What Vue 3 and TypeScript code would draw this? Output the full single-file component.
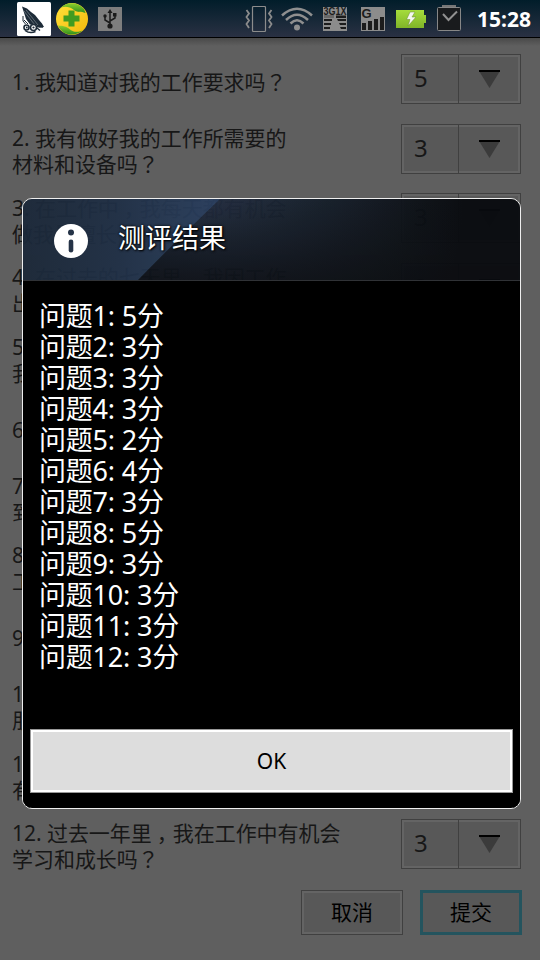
<script setup lang="ts">
interface Question {
  lines: string[]
  score: number
}

const questions: Question[] = [
  { lines: ['1. 我知道对我的工作要求吗？'], score: 5 },
  { lines: ['2. 我有做好我的工作所需要的', '材料和设备吗？'], score: 3 },
  { lines: ['3. 在工作中，我每天都有机会', '做我最擅长做的事吗？'], score: 3 },
  { lines: ['4. 在过去的七天里，我因工作', '出色而受到表扬吗？'], score: 3 },
  { lines: ['5. 我觉得我的主管或同事关心', '我的个人情况吗？'], score: 2 },
  { lines: ['6. 工作单位有人鼓励我的发展吗？'], score: 4 },
  { lines: ['7. 在工作中，我觉得我的意见受', '到重视吗？'], score: 3 },
  { lines: ['8. 公司的使命目标使我觉得我的', '工作重要吗？'], score: 5 },
  { lines: ['9. 我的同事们致力于高质量的工作吗？'], score: 3 },
  { lines: ['10. 我在工作单位有一个最要好的', '朋友吗？'], score: 3 },
  { lines: ['11. 在过去的六个月内，工作单位', '有人和我谈及我的进步吗？'], score: 3 },
  { lines: ['12. 过去一年里，我在工作中有机会', '学习和成长吗？'], score: 3 },
]

// Full-width punctuation is set centred in its cell, so it gets its own run.
const runs = (line: string): string[] => line.split(/([，？])/).filter((s) => s !== '')
</script>

<template>
  <div class="screen">
    <header class="status">
      <div class="left">
        <svg class="app" width="34" height="34" viewBox="0 0 34 34">
          <rect width="34" height="34" rx="1.5" fill="#fff" />
          <path d="M5 4.500 L10 6.500 L14 10 L18 13 L22 18 L25 21.500 L27 25 L22 25.500 L19 23 L13 22.500 L9 17 Z" fill="#1d2b38" />
          <path d="M7 9 L18 23 M9 8 L21 23" stroke="#8d979e" stroke-width=".6" />
          <path d="M6 14 V19 L8.500 22 M7 18 L11 22" stroke="#1d2b38" stroke-width="1" fill="none" />
          <g fill="#fff" stroke="#1d2b38" stroke-width="1.600">
            <circle cx="9.500" cy="25.500" r="2.500" /><circle cx="16.500" cy="25.500" r="3" />
          </g>
          <path d="M8 28.500 Q13 32 18.500 29.500 M20 26 L23 28.500 M20 24.500 L26 25" stroke="#1d2b38" stroke-width="1.400" fill="none" />
          <circle cx="9.800" cy="25.500" r=".9" fill="#1d2b38" /><circle cx="16.500" cy="25.500" r="1.100" fill="#1d2b38" />
        </svg>
        <svg class="guard" width="32" height="32" viewBox="0 0 32 32">
          <defs>
            <linearGradient id="gold" x1="0" y1="0" x2="1" y2="1">
              <stop offset="0" stop-color="#ffe23a" /><stop offset="1" stop-color="#f5b80c" />
            </linearGradient>
            <linearGradient id="leaf" x1="0" y1="0" x2="0" y2="1">
              <stop offset="0" stop-color="#8fcf2c" /><stop offset="1" stop-color="#2e8f1d" />
            </linearGradient>
          </defs>
          <circle cx="16" cy="16" r="16" fill="url(#gold)" />
          <path d="M5 4.500 C11 -1.500 22 -1.500 28 6 L29.500 10 C25 8 22 10 18 7 C14 3.500 9 3 5 4.500 Z" fill="url(#leaf)" />
          <path d="M2 22.500 C7 23 10 23 14 26.500 C18 30 24 29 27 27 C21 33.500 7 34 2 22.500 Z" fill="url(#leaf)" />
          <path d="M12.500 7.500 h6 v5 h5 v6 h-5 v5 h-6 v-5 h-5 v-6 h5 z" fill="#429c20" />
        </svg>
        <svg class="usb" width="24" height="24" viewBox="0 0 24 24">
          <rect width="24" height="24" fill="#7e7e7e" />
          <g stroke="#1b1b1b" stroke-width="1.500" fill="none">
            <path d="M12 19 V5 M12 16 L7 13 V10 M12 14 L17 11 V8" />
          </g>
          <path d="M12 2 L14.500 6 h-5 Z" fill="#1b1b1b" />
          <circle cx="12" cy="19" r="2.600" fill="#1b1b1b" />
          <circle cx="7" cy="9" r="1.700" fill="#1b1b1b" />
          <rect x="15" y="6" width="3.500" height="3.500" fill="#1b1b1b" />
        </svg>
      </div>
      <div class="right">
        <svg class="vibrate" width="28" height="26" viewBox="0 0 28 26" fill="none" stroke="#8c8c8c">
          <rect x="7.500" y=".5" width="13" height="25" rx="1" stroke-width="1.200" />
          <path d="M1.500 4 L4 7.500 L1.500 11 L4 14.500 L1.500 18 L4 22 M26.500 4 L24 7.500 L26.500 11 L24 14.500 L26.500 18 L24 22" stroke-width="1.800" />
        </svg>
        <svg class="wifi" width="32" height="24" viewBox="0 0 32 24" fill="none" stroke="#8f8f8f" stroke-width="2.500">
          <path d="M1 8.500 Q16 -5 31 8.500" />
          <path d="M5 13 Q16 2.500 27 13" />
          <path d="M9.500 16.500 Q16 10 22.500 16.500" />
          <circle cx="16" cy="20.500" r="3" fill="#8f8f8f" stroke="none" />
        </svg>
        <svg class="net" width="24" height="24" viewBox="0 0 24 24">
          <rect width="24" height="24" fill="#8c8c8c" />
          <text x="0.5" y="7.500" font-size="10" textLength="23" lengthAdjust="spacingAndGlyphs" class="glyph">3G1X</text>
          <g fill="#1c1c1c">
            <path d="M1 11 h10 v-3 h-10z" fill="#686868" /><path d="M13 8.500 h10 v2.500 h-10z" />
            <path d="M1 12 h8 v2 h-8z M1 16 h7 v2 h-7z M1 20 h6 v2 h-6z" />
            <path d="M14 12 h9 v2 h-8z M16 16 h7 v2 h-6z M17 20 h6 v2 h-5z" />
          </g>
        </svg>
        <svg class="signal" width="24" height="24" viewBox="0 0 24 24">
          <rect width="24" height="24" fill="#8c8c8c" />
          <text x="0.5" y="10.500" font-size="13" class="glyph">G</text>
          <path d="M1 16 h4 v7 h-4z M7 14 h4 v9 h-4z M13 12 h4 v11 h-4z M19 10 h4 v13 h-4z" fill="#1c1c1c" />
        </svg>
        <svg class="battery" width="30" height="18" viewBox="0 0 30 18">
          <defs>
            <linearGradient id="cell" x1="0" y1="0" x2="0" y2="1">
              <stop offset="0" stop-color="#a5dc3c" /><stop offset="1" stop-color="#80b528" />
            </linearGradient>
          </defs>
          <path d="M0 0 H28 V5 H30 V13 H28 V18 H0 Z" fill="url(#cell)" />
          <path d="M14 2 L19 2 L16 7 L20 7 L12 16 L14 9.500 L10.500 9.500 Z" fill="#f4f7ee" stroke="#6b8a33" stroke-width=".5" />
        </svg>
        <svg class="task" width="24" height="26" viewBox="0 0 24 26">
          <rect x="5" y="0" width="14" height="2" fill="#777" />
          <rect x=".5" y="2.500" width="23" height="23" rx="1" fill="#191b1d" stroke="#878787" />
          <path d="M6 9 L11.500 15 L20 6.500" fill="none" stroke="#919191" stroke-width="2" />
        </svg>
        <span class="time">15:28</span>
      </div>
    </header>

    <main class="survey">
      <div v-for="(q, i) in questions" :key="i" class="row">
        <p class="question">
          <span v-for="line in q.lines" :key="line" class="line">
            <span v-for="(r, k) in runs(line)" :key="k" :class="{ mark: r === '？', comma: r === '，' }">{{ r }}</span>
          </span>
        </p>
        <div class="select">
          <span class="value">{{ q.score }}</span>
          <span class="drop">
            <svg width="21" height="18" viewBox="0 0 21 18">
              <path d="M0 1 H21 L10.500 18 Z" fill="#3b3b3b" />
              <rect width="21" height="2" fill="#000" />
            </svg>
          </span>
        </div>
      </div>
      <div class="actions">
        <button class="btn" type="button">取消</button>
        <button class="btn focus" type="button">提交</button>
      </div>
    </main>

    <section class="dialog">
      <div class="title">
        <svg class="sheen" width="497" height="81" viewBox="0 0 497 81">
          <defs>
            <radialGradient id="dark" gradientUnits="userSpaceOnUse" cx="180" cy="0" r="260">
              <stop offset="0" stop-color="#242f43" /><stop offset=".5" stop-color="#151e29" /><stop offset="1" stop-color="#090b0f" />
            </radialGradient>
            <linearGradient id="fade" x1="0" y1="0" x2="0" y2="1">
              <stop offset="0" stop-color="#090b0f" stop-opacity="0" /><stop offset="1" stop-color="#090b0f" stop-opacity=".7" />
            </linearGradient>
            <linearGradient id="blue" gradientUnits="userSpaceOnUse" x1="0" y1="0" x2="190" y2="0">
              <stop offset="0" stop-color="#1c2939" /><stop offset=".5" stop-color="#203046" /><stop offset="1" stop-color="#2b3f5e" />
            </linearGradient>
          </defs>
          <rect width="497" height="81" fill="url(#dark)" />
          <rect width="497" height="81" fill="url(#fade)" />
          <path d="M0 0 H197 Q158 37 115 81 H0 Z" fill="url(#blue)" />
        </svg>
        <svg class="info" width="34" height="34" viewBox="0 0 34 34">
          <circle cx="17" cy="17" r="17" fill="#fff" />
          <circle cx="17" cy="8.500" r="3" fill="#253347" />
          <rect x="14.700" y="15.500" width="4.600" height="13" rx="2.300" fill="#253347" />
        </svg>
        <h1>测评结果</h1>
      </div>
      <ul class="scores">
        <li v-for="(q, i) in questions" :key="i">问题{{ i + 1 }}: {{ q.score }}分</li>
      </ul>
      <button class="ok" type="button">OK</button>
    </section>
  </div>
</template>

<style>
body {
  margin: 0;
  background: #5f5f5f;
}
</style>

<style scoped>
.screen {
  position: relative;
  box-sizing: border-box;
  width: 540px;
  height: 960px;
  overflow: hidden;
  background: #5f5f5f;
  font-family: "Noto Sans", "Noto Sans CJK SC", sans-serif;
  display: flex;
  flex-direction: column;
}
.screen svg {
  display: block;
  flex: none;
}
.status {
  box-sizing: border-box;
  height: 38px;
  flex: none;
  display: flex;
  justify-content: space-between;
  align-items: center;
  padding: 0 9px 0 17px;
  border-bottom: 1px solid #000;
  background: linear-gradient(#011d2a, #2a3143);
}
.left,
.right {
  display: flex;
  align-items: center;
}
.guard {
  margin-left: 5px;
}
.usb {
  margin-left: 10px;
}
.wifi {
  margin-left: 8px;
}
.net {
  margin-left: 10px;
}
.signal {
  margin-left: 14px;
}
.battery {
  margin-left: 11px;
}
.task {
  margin: 0 0 2px 11px;
}
.glyph {
  font-family: "Liberation Sans", sans-serif;
  font-weight: 700;
  fill: #1c1c1c;
}
.time {
  width: 54px;
  margin-left: 16px;
  color: #fff;
  font-size: 21px;
  line-height: 24px;
  font-weight: 700;
  white-space: nowrap;
}
.survey {
  flex: 1;
  padding: 10px 18px 0 12px;
  background: linear-gradient(#494949, #5f5f5f 8px);
}
.row {
  height: 69.5px;
  display: flex;
  justify-content: space-between;
  align-items: center;
}
.question {
  margin: 0 0 2px;
  color: #171717;
  font-size: 21px;
  line-height: 25px;
  letter-spacing: -0.04px;
  white-space: nowrap;
}
.line {
  display: block;
  height: 25px;
}
.mark {
  font-family: "Noto Sans CJK TC", sans-serif;
}
.comma {
  display: inline-block;
  box-sizing: border-box;
  width: 21px;
  text-indent: 5px;
}
.select {
  box-sizing: border-box;
  width: 120px;
  height: 50px;
  margin: 0 1px 7px 0;
  border: 1px solid #404040;
  box-shadow: inset 0 0 0 2px #646464;
  background: #585858;
  display: flex;
}
.value {
  box-sizing: border-box;
  width: 56px;
  padding-left: 12px;
  color: #171717;
  font-size: 24px;
  line-height: 46px;
}
.drop {
  flex: 1;
  border-left: 1px solid #404040;
  display: flex;
  justify-content: center;
  padding: 15px 0 0;
}
.actions {
  display: flex;
  justify-content: flex-end;
  gap: 17px;
  padding-top: 8px;
}
.btn {
  box-sizing: border-box;
  width: 102px;
  height: 45px;
  padding: 0;
  border: 1px solid #404040;
  border-radius: 0;
  box-shadow: inset 0 0 0 2px #646464;
  background: #585858;
  color: #000;
  font: 21px/25px "Noto Sans", "Noto Sans CJK SC", sans-serif;
}
.focus {
  border: 3px solid #24545e;
  box-shadow: none;
}
.dialog {
  position: absolute;
  left: 22px;
  top: 198px;
  box-sizing: border-box;
  width: 499px;
  height: 611px;
  border: 1px solid #eee;
  border-radius: 10px;
  overflow: hidden;
  display: flex;
  flex-direction: column;
  color: #fff;
}
.title {
  position: relative;
  height: 81px;
  flex: none;
  display: flex;
  align-items: center;
  border-bottom: 1px solid #303236;
}
.sheen {
  position: absolute;
  inset: 0;
  opacity: 0.95;
}
.info {
  position: relative;
  margin: 3px 0 0 31px;
}
h1 {
  position: relative;
  margin: 0 0 4px 30px;
  font-size: 27px;
  line-height: 36px;
  font-weight: 400;
  text-shadow: 0 0 3px #000, 1px 1px 2px #000;
}
.scores {
  flex: 1;
  margin: 0;
  padding: 19px 16px 0;
  list-style: none;
  background: #000;
  font-size: 27px;
  letter-spacing: -0.2px;
}
.scores li {
  height: 31px;
  line-height: 31px;
}
.ok {
  box-sizing: border-box;
  flex: none;
  height: 79px;
  padding: 1px 0 0;
  border: solid #000;
  border-width: 0 7px 15px;
  border-radius: 0;
  background: #ddd;
  box-shadow: inset 0 0 0 1px #999, inset 0 0 0 3px #fff;
  color: #000;
  font: 21px/25px "Noto Sans", sans-serif;
}
</style>
